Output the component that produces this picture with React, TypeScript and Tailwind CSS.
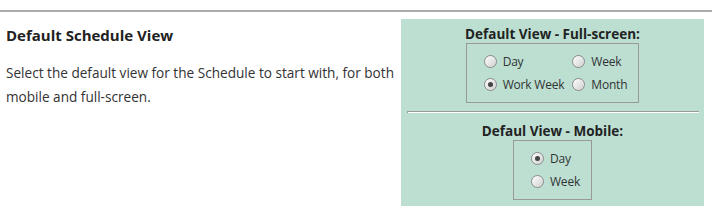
const Radio = ({ checked }: { checked?: boolean }) => (
  <span className="flex h-[13px] w-[13px] shrink-0 items-center justify-center rounded-full border border-[#8a8a8a] bg-linear-to-br from-white to-[#cfcfcf] shadow-[inset_0_0_1px_#fff]">
    {checked && <span className="h-[5px] w-[5px] rounded-full bg-[#444]" />}
  </span>
);

const Option = ({ label, checked }: { label: string; checked?: boolean }) => (
  <label className="flex h-[23px] items-center gap-[6px] whitespace-nowrap">
    <Radio checked={checked} />
    <span>{label}</span>
  </label>
);

export default function App() {
  return (
    <div
      className="h-[212px] w-[712px] bg-white pt-[10px] text-[#333]"
      style={{ fontFamily: '"Open Sans", "Noto Sans", sans-serif' }}
    >
      <div className="h-[2px] w-full bg-[#ababab]" />
      <div className="mt-[7px] flex">
        <div className="w-[401px] px-[6px] pt-[6px]">
          <h2 className="text-[15px] font-bold leading-[20px] text-[#222]">Default Schedule View</h2>
          <p className="mt-[16px] text-[13.6px] leading-[24px]">
            Select the default view for the Schedule to start with, for both mobile and full-screen.
          </p>
        </div>
        <div className="flex h-[187px] w-[303px] flex-col items-center bg-[#bcdfd2] pt-[7px]">
          <div className="text-[13.5px] font-bold leading-[17px] text-[#222]">Default View - Full-screen:</div>
          <div className="grid grid-cols-[auto_auto] gap-x-[8px] border border-[#999] py-[6px] pl-[17px] pr-[11px] text-[12px] tracking-[-0.2px]">
            <Option label="Day" />
            <Option label="Week" />
            <Option label="Work Week" checked />
            <Option label="Month" />
          </div>
          <div className="mt-[8px] h-[2px] w-[292px] border-t border-l border-[#9a9a9a] border-b-white bg-white" />
          <div className="mt-[10px] text-[13.5px] font-bold leading-[17px] text-[#222]">Defaul View - Mobile:</div>
          <div className="flex flex-col border border-[#999] py-[6px] pl-[17px] pr-[11px] text-[12px] tracking-[-0.2px]">
            <Option label="Day" checked />
            <Option label="Week" />
          </div>
        </div>
      </div>
    </div>
  );
}
